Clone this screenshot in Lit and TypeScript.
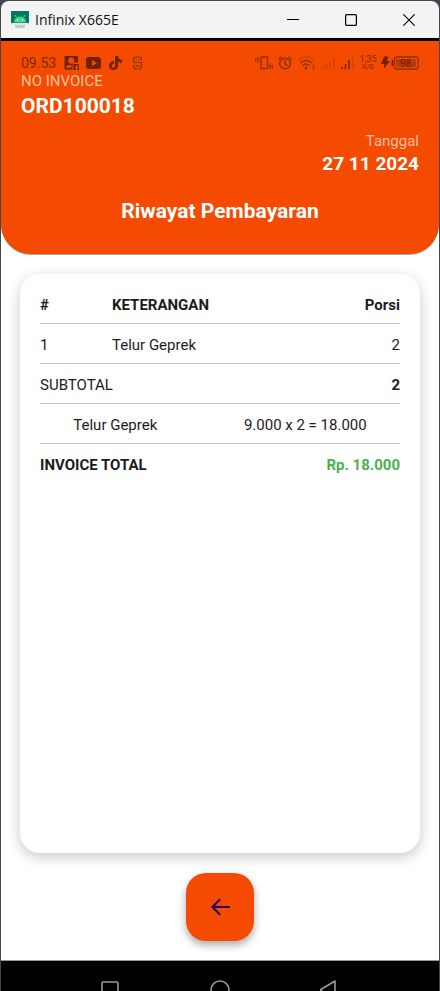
import { LitElement, html, css, svg } from "lit";
import { customElement } from "lit/decorators.js";

@customElement("title-bar")
class TitleBar extends LitElement {
  static styles = css`
    :host {
      display: flex;
      align-items: center;
      height: 37px;
      flex: none;
      padding-right: 1px;
      background: #f3f3f3;
      border-radius: 8px 8px 0 0;
      border-bottom: 3px solid #000;
      font: 14px/20px "Open Sans", "Noto Sans", sans-serif;
      color: #111;
    }
    .logo {
      margin: 0 6px 0 10px;
      flex: none;
    }
    .name {
      flex: 1;
    }
    button {
      width: 58px;
      height: 37px;
      padding: 0;
      border: 0;
      background: none;
      display: grid;
      place-items: center;
    }
  `;

  render() {
    return html`
      <svg class="logo" width="18" height="18" viewBox="0 0 18 18" aria-hidden="true">
        <rect width="18" height="13" fill="#067565" />
        <path d="M3 11.500a6 6 0 0 1 12 0z" fill="#3ddc84" />
        <path d="M5.500 6.500 4 4M12.500 6.500 14 4" stroke="#3ddc84" stroke-width="1" />
        <circle cx="6.500" cy="9" r=".8" fill="#e8fff2" />
        <circle cx="11.500" cy="9" r=".8" fill="#e8fff2" />
        <rect y="12" width="18" height="2" fill="#e3e6e6" />
        <path d="M4 14h10v2l-1 1H5l-1-1z" fill="#c4c7c8" />
      </svg>
      <span class="name">Infinix X665E</span>
      <button aria-label="Minimize">
        <svg width="12" height="12" viewBox="0 0 12 12"><path d="M0 5.500h12" stroke="#000" /></svg>
      </button>
      <button aria-label="Maximize">
        <svg width="12" height="12" viewBox="0 0 12 12">
          <rect x=".6" y=".6" width="10.800" height="10.800" rx="1" fill="none" stroke="#000" stroke-width="1.200" />
        </svg>
      </button>
      <button aria-label="Close">
        <svg width="12" height="12" viewBox="0 0 12 12">
          <path d="M.3.300l11.400 11.400M11.700.300.300 11.700" stroke="#000" stroke-width="1.100" />
        </svg>
      </button>
    `;
  }
}

@customElement("status-bar")
class StatusBar extends LitElement {
  static styles = css`
    :host {
      display: flex;
      align-items: center;
      height: 16px;
      color: #7b2a04;
      font: 14px/16px Roboto, sans-serif;
    }
    .time {
      margin-right: 8px;
    }
    .spacer {
      flex: 1;
    }
    svg {
      flex: none;
      display: block;
    }
    .speed {
      width: 24px;
      font-size: 9px;
      line-height: 8px;
      text-align: center;
    }
    .speed span {
      display: block;
    }
    .speed .unit {
      font-size: 7px;
    }
  `;

  render() {
    return html`
      <span class="time">09.53</span>
      <svg width="68" height="16" viewBox="0 0 68 16" aria-hidden="true">
        <path
          fill="#702306"
          fill-rule="evenodd"
          d="M1.500 1h11.500q1 0 1 1v5.500h-2.500q-3 0-3 2.500v4.500h-7q-1 0-1-1V2q0-1 1-1zM7.300 2.500a3 3 0 0 0 0 6.200 3 3 0 0 0 0-6.200zM2 12.700h5.500v-2.500q-4-.7-5.500 1.300z"
        />
        <path fill="#702306" fill-rule="evenodd" d="M9.500 9H15v6h-1.800v-2h1v-1.200h-1q0-1 1-1V9.700q-2.200 0-2.200 2.100h-1V13h1v2H9.500z" />
        <path
          fill="#702306"
          fill-rule="evenodd"
          d="M25 2h9q3 0 3 3v6q0 3-3 3h-9q-3 0-3-3V5q0-3 3-3zM28 5v6l5-3z"
        />
        <path
          fill="#702306"
          d="M51 1h3q0 3 4 4v3q-2 0-4-1.500V11q-.5 4-4.500 4T45 11q0-4.500 5-5v3q-2.300 0-2.300 2t2 1.500T51 11z"
        />
      </svg>
      <svg width="11" height="16" viewBox="0 0 11 16" aria-hidden="true">
        <g fill="none" stroke="#8b3008" stroke-width="1.200">
          <path d="M1.500 7.500h8.500M1.500 8V4.500Q1.500 2 4 2h3q2.500 0 2.500 2.500V5.500" />
          <path d="M9.500 7.500V11q0 3-3 3h-2q-3 0-3-3v-1" />
          <path d="M3.500 4.800h1.300M6.300 4.800h1.300M3.500 10.800h4" />
        </g>
      </svg>
      <span class="spacer"></span>
      <svg width="102" height="16" viewBox="0 0 102 16" aria-hidden="true">
        <g fill="none" stroke="#8b3008" stroke-width="1.400">
          <rect x="7" y="2" width="6.500" height="11.500" rx=".5" />
          <path d="M1.700 3v3.500M4 2v5.500M16 8.500v5.500M18.300 10v3.500" stroke-width="1.300" />
          <circle cx="31" cy="8.500" r="5.300" />
          <path d="M31 5v4l2.500 1.500M24.500 4.500l3-2.700M37.500 4.500l-3-2.700" />
        </g>
        <g fill="none" stroke="#8b3008" stroke-width="1.500">
          <path d="M44 5q8-6.500 16 0" opacity=".35" />
          <path d="M46 8q6-5 12 0M48.500 10.500q3.500-3 7 0" />
        </g>
        <circle cx="52" cy="13" r="1.500" fill="#8b3008" />
        <path d="M58.800 9.500h1.400v2h-1.400zM58.800 12.500h1.400v2h-1.400z" fill="#8b3008" opacity=".8" />
        <g stroke="#8b3008" stroke-width="1.500">
          <path d="M69 12v2M72.500 9v5M76 6v8M80 2v12" opacity=".35" />
          <path d="M88 12v2.500M91.500 9v5.500M95 5v9.500" stroke="#702306" />
          <path d="M99 2v12.500" opacity=".35" />
        </g>
      </svg>
      <span class="speed"><span>1,35</span><span class="unit">K/S</span></span>
      <svg width="39" height="16" viewBox="0 0 39 16" aria-hidden="true">
        <path d="M4 1.500h4.500L7 6h3L3.500 14 4.500 9H1z" fill="#702306" />
        <rect x="14.200" y="2" width="24" height="12" rx="2.500" fill="none" stroke="#8b3008" stroke-width="1.300" />
        <path d="M12.400 5v6" stroke="#702306" stroke-width="1.500" />
        <rect x="16" y="4" width="20" height="8" fill="#b83b04" />
        <text x="25.500" y="11.500" text-anchor="middle" font-size="10" fill="#661d04">98</text>
      </svg>
    `;
  }
}

@customElement("app-root")
class AppRoot extends LitElement {
  static styles = css`
    :host {
      display: flex;
      flex-direction: column;
      box-sizing: border-box;
      min-height: 100vh;
      padding: 1px 1px 0;
      background: #45454b;
      font: 15px/16px Roboto, sans-serif;
      color: #1d1b20;
    }
    .screen {
      flex: 1;
      display: flex;
      flex-direction: column;
      background: #fff;
    }
    header {
      padding: 14px 20px 31px;
      background: #f44b00;
      color: #fff;
      border-radius: 0 0 30px 30px;
      box-shadow: 0 1px 0 #a8a29e;
    }
    .label {
      color: #ffc0a0;
      margin: 2px 0 5px;
    }
    .value {
      font-size: 19px;
      line-height: 24px;
      font-weight: 700;
    }
    .order {
      font-size: 21px;
    }
    .date {
      text-align: right;
      margin-top: 15px;
    }
    .date .label {
      margin: 0 0 3px;
    }
    h1 {
      margin: 23px 0 0;
      font-size: 21px;
      line-height: 24px;
      text-align: center;
    }
    .card {
      flex: 1;
      margin: 20px 19px;
      padding: 10px 20px;
      border-radius: 20px;
      background: #fff;
      box-shadow: 0 4px 14px rgba(0, 0, 0, 0.22);
    }
    table {
      width: 100%;
      border-collapse: separate;
      border-spacing: 0;
      table-layout: fixed;
    }
    th,
    td {
      box-sizing: border-box;
      height: 40px;
      padding: 2px 0 0;
      text-align: left;
      border-bottom: 1px solid #cac4d0;
    }
    tbody tr:last-child > * {
      border-bottom: 0;
    }
    .num {
      width: 20%;
    }
    .qty {
      width: 25%;
    }
    .end {
      text-align: right;
      white-space: nowrap;
    }
    .light {
      font-weight: 400;
    }
    .strong {
      font-weight: 700;
    }
    .detail {
      display: flex;
      justify-content: space-around;
      gap: 20px;
    }
    .total {
      color: #4caf50;
      font-weight: 700;
    }
    .back {
      align-self: center;
      display: grid;
      place-items: center;
      width: 68px;
      height: 68px;
      margin-bottom: 19px;
      padding: 0;
      border: 0;
      border-radius: 20px;
      background: #f44b00;
      box-shadow: 0 4px 8px rgba(0, 0, 0, 0.34);
    }
    nav {
      display: flex;
      justify-content: center;
      gap: 90px;
      height: 11px;
      padding-top: 19px;
      overflow: hidden;
      background: #000;
      border-top: 1px solid #999;
    }
    nav button {
      width: 20px;
      height: 20px;
      padding: 0;
      border: 0;
      background: none;
    }
    nav svg {
      display: block;
    }
  `;

  private navButton(label: string, shape: unknown) {
    return html`<button aria-label=${label}>
      <svg width="20" height="20" viewBox="0 0 20 20" fill="none" stroke="#999" stroke-width="1.600" stroke-linejoin="round">
        ${shape}
      </svg>
    </button>`;
  }

  render() {
    return html`
      <title-bar></title-bar>
      <main class="screen">
        <header>
          <status-bar></status-bar>
          <div class="label">NO INVOICE</div>
          <div class="value order">ORD100018</div>
          <div class="date">
            <div class="label">Tanggal</div>
            <div class="value">27 11 2024</div>
          </div>
          <h1>Riwayat Pembayaran</h1>
        </header>
        <section class="card">
          <table>
            <thead>
              <tr>
                <th class="num" scope="col">#</th>
                <th scope="col">KETERANGAN</th>
                <th class="qty end" scope="col">Porsi</th>
              </tr>
            </thead>
            <tbody>
              <tr>
                <td>1</td>
                <td>Telur Geprek</td>
                <td class="end">2</td>
              </tr>
              <tr>
                <th class="light" colspan="2" scope="row">SUBTOTAL</th>
                <td class="end strong">2</td>
              </tr>
              <tr>
                <td colspan="3">
                  <div class="detail"><span>Telur Geprek</span><span>9.000 x 2 = 18.000</span></div>
                </td>
              </tr>
              <tr>
                <th colspan="2" scope="row">INVOICE TOTAL</th>
                <td class="end total">Rp. 18.000</td>
              </tr>
            </tbody>
          </table>
        </section>
        <button class="back" aria-label="Kembali">
          <svg width="24" height="24" viewBox="0 0 24 24" fill="#21005d">
            <path d="M22 11v2H6.800l6 6-1.400 1.400L3 12l8.400-8.400L12.800 5l-6 6z" />
          </svg>
        </button>
        <nav>
          ${this.navButton("Recent", svg`<rect x="2" y="2" width="16" height="16" rx="1" />`)}
          ${this.navButton("Home", svg`<circle cx="10" cy="10" r="9" />`)}
          ${this.navButton("Back", svg`<path d="M15 1v18L0 10z" />`)}
        </nav>
      </main>
    `;
  }
}
